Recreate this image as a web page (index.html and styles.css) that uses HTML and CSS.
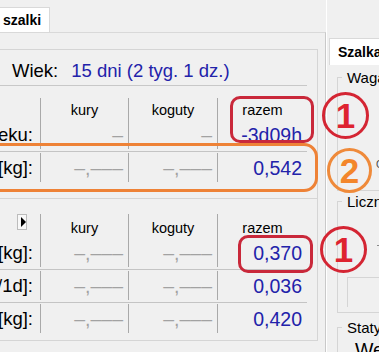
FILE: index.html
```html
<!DOCTYPE html>
<html lang="pl">
<head>
<meta charset="utf-8">
<title>szalki</title>
<link rel="stylesheet" href="styles.css">
</head>
<body>
<div class="app">
  <section class="left">
    <div class="tabstrip">
      <div class="tab">szalki</div>
    </div>
    <div class="page">
      <div class="box box-a">
        <div class="age">
          <span class="age-label">Wiek:</span>
          <span class="age-value">15 dni (2 tyg. 1 dz.)</span>
        </div>
        <div class="grid grid-a">
          <div class="row head">
            <div class="cell lab"></div>
            <div class="cell">kury</div>
            <div class="cell">koguty</div>
            <div class="cell">razem</div>
          </div>
          <div class="row first sep">
            <div class="cell lab">Różnica wieku:</div>
            <div class="cell num dim">–</div>
            <div class="cell num dim">–</div>
            <div class="cell num val">-3d09h</div>
          </div>
          <div class="row">
            <div class="cell lab">Waga [kg]:</div>
            <div class="cell num dim">–,–––</div>
            <div class="cell num dim">–,–––</div>
            <div class="cell num val">0,542</div>
          </div>
        </div>
      </div>
      <div class="box box-b">
        <div class="grid">
          <div class="row head tall">
            <div class="cell lab"><span class="play"></span></div>
            <div class="cell">kury</div>
            <div class="cell">koguty</div>
            <div class="cell">razem</div>
          </div>
          <div class="row first sep">
            <div class="cell lab">Masa [kg]:</div>
            <div class="cell num dim">–,–––</div>
            <div class="cell num dim">–,–––</div>
            <div class="cell num val">0,370</div>
          </div>
          <div class="row sep">
            <div class="cell lab">Przyrost [kg/1d]:</div>
            <div class="cell num dim">–,–––</div>
            <div class="cell num dim">–,–––</div>
            <div class="cell num val">0,036</div>
          </div>
          <div class="row">
            <div class="cell lab">Norma [kg]:</div>
            <div class="cell num dim">–,–––</div>
            <div class="cell num dim">–,–––</div>
            <div class="cell num val">0,420</div>
          </div>
        </div>
      </div>
    </div>
  </section>
  <section class="right">
    <div class="rtabs">
      <div class="rtab">Szalka</div>
    </div>
    <div class="rpage">
      <div class="gbox gbox-w">
        <div class="glabel">Waga</div>
        <div class="peek">C</div>
      </div>
      <div class="gbox gbox-l">
        <div class="glabel">Liczniki</div>
        <div class="tick"></div>
        <div class="inner"></div>
      </div>
      <div class="gbox gbox-s">
        <div class="glabel">Statystyka</div>
        <div class="big">Wersja</div>
      </div>
    </div>
  </section>
</div>

<div class="frame red r1"></div>
<div class="frame orange o1"></div>
<div class="frame red r2"></div>
<div class="badge red c1">1</div>
<div class="badge orange c2">2</div>
<div class="badge red c3">1</div>
</body>
</html>
```
FILE: styles.css
```css
* { box-sizing: border-box; margin: 0; padding: 0; }

html, body {
  width: 379px;
  height: 352px;
  overflow: hidden;
}

body {
  background: #f0f0f0;
  font-family: "Liberation Sans", Arial, sans-serif;
  color: #000;
}

.app {
  display: flex;
  height: 352px;
}

/* ---------- left panel ---------- */
.left {
  width: 326px;
  flex: none;
  display: flex;
  flex-direction: column;
}

.tabstrip {
  height: 32px;
  display: flex;
  align-items: flex-end;
}

.tab {
  margin-left: -12px;
  width: 62px;
  height: 25px;
  background: #fff;
  border-top: 1px solid #d9d9d9;
  border-right: 1px solid #d9d9d9;
  padding-left: 15px;
  font-weight: bold;
  font-size: 14px;
  line-height: 24px;
}

.page {
  flex: 1;
  border-top: 1px solid #d9d9d9;
  border-right: 1px solid #c9c9c9;
  padding-top: 16px;
}

.box {
  margin-left: -10px;
  margin-right: 7px;
  border-right: 1px solid #d5d5d5;
  border-bottom: 1px solid #d5d5d5;
}

.box-a {
  border-top: 1px solid #d5d5d5;
  padding-bottom: 14px;
}

.box-b {
  padding-top: 3px;
  padding-bottom: 5px;
}

.age {
  height: 35px;
  padding: 10px 0 0 22px;
  display: flex;
  gap: 13px;
  font-size: 18.5px;
  line-height: 21px;
  white-space: nowrap;
}

.age-value { color: #2222aa; }

.grid { margin-right: 10px; }
.grid-a { border-top: 1px solid #c8c8c8; }

.row {
  display: flex;
  height: 32px;
}
.row.sep {
  height: 33px;
  border-bottom: 1px solid #c4c4c4;
}
.row.head { height: 33px; }
.row.head.tall { height: 35px; }

.cell {
  flex: none;
  display: flex;
  justify-content: flex-end;
  border-left: 1px solid #a9a9a9;
  margin: 1px 0 2px;
  padding: 2px 5px 0 0;
  font-size: 19.5px;
  line-height: 26px;
  white-space: nowrap;
}
.cell:nth-child(1) { width: 50px; }
.cell:nth-child(2) { width: 88px; }
.cell:nth-child(3) { width: 89px; }
.cell:nth-child(4) { width: 90px; }

.cell.lab {
  border-left: none;
  padding-right: 7px;
  font-size: 18.5px;
}

.first .cell {
  margin-top: 0;
  padding-top: 3px;
}

.head .cell {
  margin: 12px 0 0;
  padding: 0;
  font-size: 14.5px;
  line-height: 17px;
  align-items: flex-end;
  justify-content: center;
}
.head .cell.lab {
  justify-content: flex-end;
  align-items: flex-start;
  padding-right: 13px;
}

.dim { color: #a2a2a2; }
.val { color: #2222aa; }

.play {
  width: 10px;
  height: 16px;
  border: 1px solid #bcbcbc;
  background: #f8f8f8;
  display: flex;
  align-items: center;
  padding-left: 3px;
}
.play::after {
  content: "";
  border-left: 5px solid #000;
  border-top: 5px solid transparent;
  border-bottom: 5px solid transparent;
}

/* ---------- right panel ---------- */
.right {
  flex: 1;
  min-width: 0;
  overflow: hidden;
  border-left: 1px solid #fff;
  padding-left: 2px;
  display: flex;
  flex-direction: column;
}

.rtabs {
  height: 65px;
  padding-top: 38px;
}

.rtab {
  width: 60px;
  height: 27px;
  background: #fff;
  border-left: 1px solid #d9d9d9;
  border-top: 1px solid #d9d9d9;
  padding-left: 8px;
  font-weight: bold;
  font-size: 14px;
  line-height: 26px;
  white-space: nowrap;
}

.rpage { padding-left: 8px; }

.gbox {
  width: 60px;
  border-top: 1px solid #d5d5d5;
  border-left: 1px solid #d5d5d5;
  border-bottom: 1px solid #d5d5d5;
}
.gbox-w { margin-top: 12px; height: 114px; }
.gbox-l { margin-top: 10px; height: 112px; }
.gbox-s { margin-top: 14px; height: 60px; border-bottom: none; }

.glabel {
  width: max-content;
  margin: -9px 0 0 4px;
  padding: 0 3px 0 5px;
  background: #f0f0f0;
  font-size: 15px;
  line-height: 17px;
  white-space: nowrap;
}

.peek {
  margin: 73px 0 0 38px;
  font-size: 10px;
  line-height: 12px;
  color: #444;
}

.tick {
  margin: 35px 0 0 39px;
  width: 4px;
  border-top: 1px solid #8a8a8a;
}

.inner {
  margin: 31px 0 0 9px;
  border-top: 1px solid #d5d5d5;
  border-left: 1px solid #d5d5d5;
  height: 30px;
}

.big {
  margin: 3px 0 0 17px;
  font-size: 19.5px;
  line-height: 22px;
  white-space: nowrap;
}

/* ---------- annotations ---------- */
.frame {
  position: absolute;
  border: 3px solid;
  border-radius: 10px;
}
.frame.red { border-color: #c9283a; }
.frame.orange { border-color: #ee8236; border-radius: 14px; }

.r1 { left: 230px; top: 96px; width: 84px; height: 47px; }
.r2 { left: 238px; top: 235px; width: 75px; height: 38px; }
.o1 { left: -20px; top: 143px; width: 338px; height: 49px; }

.badge {
  position: absolute;
  border: 3px solid;
  border-radius: 50%;
  display: flex;
  align-items: center;
  justify-content: center;
  font-weight: bold;
  font-size: 35px;
  line-height: 35px;
}
.badge.red { border-color: #d42533; color: #de2330; }
.badge.orange { border-color: #ef8a3a; color: #f3862b; }

.c1 { left: 322px; top: 92px; width: 47px; height: 47px; }
.c2 { left: 327px; top: 148px; width: 45px; height: 45px; }
.c3 { left: 320px; top: 226px; width: 47px; height: 47px; }
```
